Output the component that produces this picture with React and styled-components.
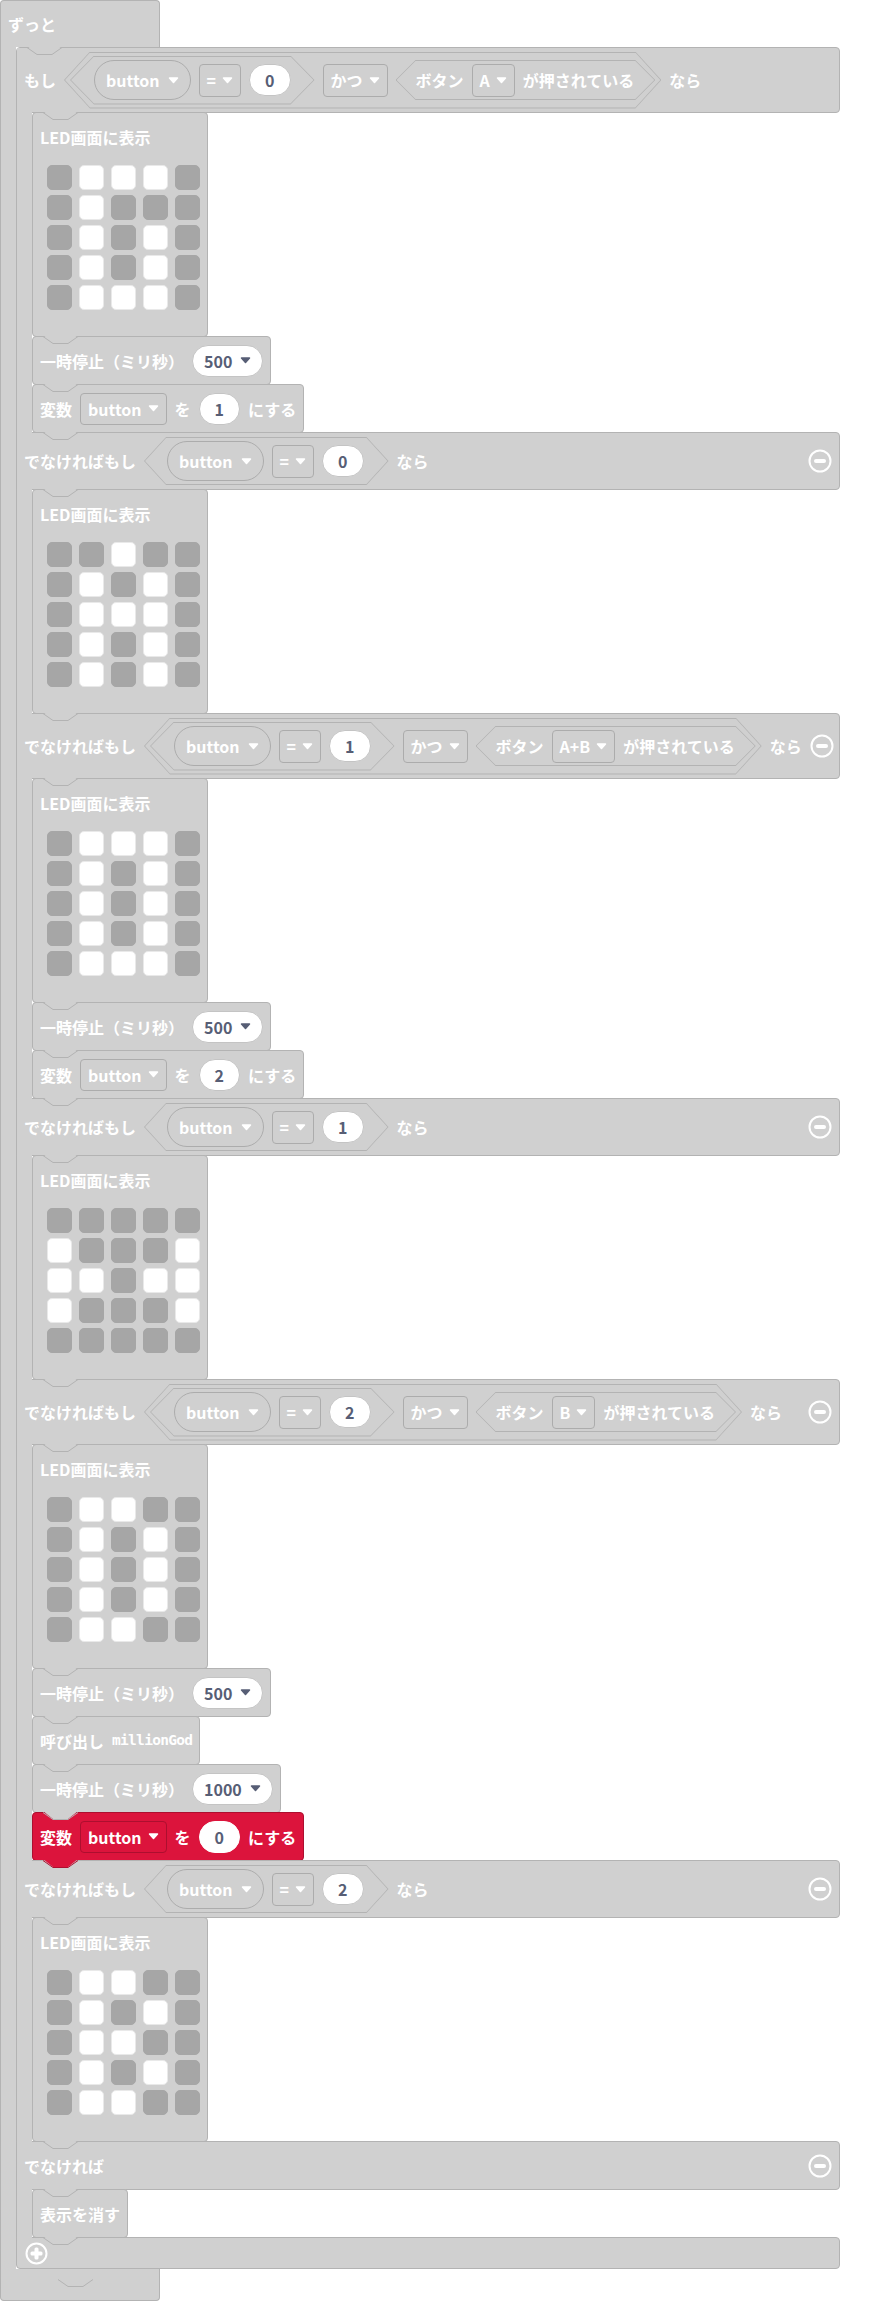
import React from 'react'
import styled, { createGlobalStyle } from 'styled-components'

const FILL = '#d0d0d0'
const EDGE = '#b3b3b3'
const FIELD_EDGE = '#acacac'
const LED_OFF = '#a6a6a6'
const RED = '#dc143c'
const RED_EDGE = '#ad0f2f'
const INK = '#575e75'

const GlobalStyle = createGlobalStyle`
  * { box-sizing: border-box; }
  body {
    margin: 0;
    background: #fff;
    font-family: "Noto Sans CJK JP", "Noto Sans", sans-serif;
    font-weight: 700;
    font-size: 16px;
    color: #fff;
  }
`

const Workspace = styled.div`
  width: 892px;
  min-height: 2302px;
  display: flex;
  flex-direction: column;
  align-items: flex-start;
`

const Forever = styled.div`
  display: flex;
  flex-direction: column;
  align-items: flex-start;
`

const ForeverHead = styled.div`
  position: relative;
  width: 160px;
  height: 47px;
  display: flex;
  align-items: center;
  padding-left: 7px;
  background: ${FILL};
  border: 1px solid ${EDGE};
  border-bottom: none;
  border-radius: 4px 4px 0 0;
`

const ForeverBody = styled.div`
  display: flex;
`

const ForeverFoot = styled.div`
  width: 160px;
  height: 32px;
  background: ${FILL};
  border: 1px solid ${EDGE};
  border-top: none;
  border-radius: 0 0 4px 4px;
`

const Arm = styled.div`
  width: 16px;
  flex-shrink: 0;
  background: ${FILL};
  border-left: 1px solid ${EDGE};
`

const IfBlock = styled.div`
  width: 824px;
  display: flex;
  flex-direction: column;
  & > * + * { margin-top: -1px; }
`

/* header row of the if / else-if / else parts; the mask hides the border where the arm runs through */
const CHeader = styled.div`
  position: relative;
  display: flex;
  align-items: center;
  gap: 8px;
  height: ${({ $h }) => $h}px;
  padding: 0 7px;
  background: ${FILL};
  border: 1px solid ${EDGE};
  border-radius: ${({ $first }) => ($first ? '4px 4px 4px 0' : '0 4px 4px 0')};
  &::before {
    content: '';
    position: absolute;
    left: 0;
    width: 15px;
    top: ${({ $first }) => ($first ? '0' : '-1px')};
    bottom: -1px;
    background: ${FILL};
  }
`

const CFoot = styled.div`
  position: relative;
  display: flex;
  align-items: center;
  height: 32px;
  padding-left: 8px;
  background: ${FILL};
  border: 1px solid ${EDGE};
  border-radius: 0 4px 4px 4px;
  &::before {
    content: '';
    position: absolute;
    left: 0;
    width: 15px;
    top: -1px;
    height: 2px;
    background: ${FILL};
  }
  & > svg { position: relative; }
`

const CBody = styled.div`
  display: flex;
`

const Stack = styled.div`
  display: flex;
  flex-direction: column;
  align-items: flex-start;
  & > * + * { margin-top: -1px; }
`

const Statement = styled.div`
  position: relative;
  display: flex;
  align-items: center;
  gap: 8px;
  height: 49px;
  padding: 0 7px;
  background: ${({ $red }) => ($red ? RED : FILL)};
  border: 1px solid ${({ $red }) => ($red ? RED_EDGE : EDGE)};
  border-radius: 4px;
`

const Label = styled.span`
  position: relative;
  line-height: 1;
  white-space: nowrap;
`

const Mono = styled.span`
  font-family: "DejaVu Sans Mono", "Liberation Mono", monospace;
  font-size: 14.5px;
  letter-spacing: -0.7px;
  line-height: 1;
`

const LedBlock = styled.div`
  position: relative;
  width: 176px;
  height: 225px;
  padding: 0 7px;
  background: ${FILL};
  border: 1px solid ${EDGE};
  border-radius: 4px;
`

const LedTitle = styled.div`
  height: 48px;
  display: flex;
  align-items: center;
  line-height: 1;
`

const LedGrid = styled.div`
  display: grid;
  grid-template-columns: repeat(5, 25px);
  grid-auto-rows: 25px;
  column-gap: 7px;
  row-gap: 5px;
  margin: 4px 0 0 7px;
`

const Led = styled.div`
  border-radius: 5px;
  background: ${({ $on }) => ($on ? '#fff' : LED_OFF)};
  border: 1px solid ${({ $on }) => ($on ? '#e9e9e9' : LED_OFF)};
`

const hexShape = (t) =>
  `polygon(${t}px 0, calc(100% - ${t}px) 0, 100% 50%, calc(100% - ${t}px) 100%, ${t}px 100%, 0 50%)`

const Hex = styled.div`
  position: relative;
  isolation: isolate;
  flex-shrink: 0;
  display: flex;
  align-items: center;
  gap: 8px;
  height: ${({ $h }) => $h}px;
  padding: 0 ${({ $pr }) => $pr}px 0 ${({ $pl }) => $pl}px;
  background: ${EDGE};
  clip-path: ${({ $tip }) => hexShape($tip)};
  &::before {
    content: '';
    position: absolute;
    inset: 1px;
    z-index: -1;
    background: ${FILL};
    clip-path: ${({ $tip }) => hexShape($tip - 1)};
  }
`

const VarPill = styled.div`
  display: flex;
  align-items: center;
  gap: 8px;
  height: 40px;
  padding: 0 11px;
  border: 1px solid ${FIELD_EDGE};
  border-radius: 20px;
  line-height: 1;
  flex-shrink: 0;
`

const Dropdown = styled.div`
  display: flex;
  align-items: center;
  gap: 6px;
  height: ${({ $h }) => $h || 33}px;
  padding: 0 7px;
  border: 1px solid ${({ $red }) => ($red ? RED_EDGE : FIELD_EDGE)};
  border-radius: 4px;
  line-height: 1;
  flex-shrink: 0;
`

const NumberPill = styled.div`
  display: flex;
  align-items: center;
  gap: 8px;
  height: 32px;
  padding: 0 ${({ $menu }) => ($menu ? '11px' : '15px')};
  background: #fff;
  border: 1px solid ${({ $red }) => ($red ? '#fff' : '#c4c4c4')};
  border-radius: 16px;
  color: ${INK};
  line-height: 1;
  flex-shrink: 0;
`

const IconSlot = styled.div`
  position: relative;
  margin-left: auto;
  display: flex;
  align-items: center;
`

const TabSvg = styled.svg`
  position: absolute;
  left: ${({ $left }) => $left}px;
  top: 100%;
  z-index: 5;
  overflow: visible;
`

function Tab({ left = 10, fill = FILL, stroke = EDGE }) {
  return (
    <TabSvg $left={left} width="36" height="9" viewBox="0 0 36 9">
      <path d="M0 -1 H35 L25 7 H10 Z" fill={fill} />
      <path d="M0 0.5 L10 7.5 H25 L35 0.5" fill="none" stroke={stroke} strokeWidth="1" />
    </TabSvg>
  )
}

function Arrow({ color = '#fff' }) {
  return (
    <svg width="11" height="7" viewBox="0 0 11 7">
      <path d="M1.5 1 H9.5 L5.5 5.5 Z" fill={color} stroke={color} strokeWidth="1.5" strokeLinejoin="round" />
    </svg>
  )
}

function MinusIcon() {
  return (
    <svg width="24" height="24" viewBox="0 0 24 24">
      <circle cx="12" cy="12" r="10.5" fill="none" stroke="#fff" strokeWidth="2" />
      <rect x="6" y="10" width="12" height="4" rx="2" fill="#fff" />
    </svg>
  )
}

function PlusIcon() {
  return (
    <svg width="23" height="23" viewBox="0 0 23 23">
      <circle cx="11.5" cy="11.5" r="10" fill="none" stroke="#fff" strokeWidth="2" />
      <rect x="5.5" y="9.5" width="12" height="4" rx="1.5" fill="#fff" />
      <rect x="9.5" y="5.5" width="4" height="12" rx="1.5" fill="#fff" />
    </svg>
  )
}

const LED1 = ['01110', '01000', '01010', '01010', '01110']
const LED2 = ['00100', '01010', '01110', '01010', '01010']
const LED3 = ['01110', '01010', '01010', '01010', '01110']
const LED4 = ['00000', '10001', '11011', '10001', '00000']
const LED5 = ['01100', '01010', '01010', '01010', '01100']
const LED6 = ['01100', '01010', '01100', '01010', '01100']

function ShowLeds({ rows }) {
  return (
    <LedBlock>
      <LedTitle>LED画面に表示</LedTitle>
      <LedGrid>
        {rows.join('').split('').map((c, i) => (
          <Led key={i} $on={c === '1'} />
        ))}
      </LedGrid>
      <Tab />
    </LedBlock>
  )
}

function Pause({ ms }) {
  return (
    <Statement>
      <Label>一時停止（ミリ秒）</Label>
      <NumberPill $menu>
        {ms}
        <Arrow color={INK} />
      </NumberPill>
      <Tab />
    </Statement>
  )
}

function SetVar({ value, red }) {
  return (
    <Statement $red={red}>
      <Label>変数</Label>
      <Dropdown $h={32} $red={red}>
        button
        <Arrow />
      </Dropdown>
      <Label>を</Label>
      <NumberPill $red={red}>{value}</NumberPill>
      <Label>にする</Label>
      <Tab fill={red ? RED : FILL} stroke={red ? RED_EDGE : EDGE} />
    </Statement>
  )
}

function Compare({ value, inAnd }) {
  return (
    <Hex $h={inAnd ? 49 : 48} $tip={inAnd ? 24 : 22} $pl={inAnd ? 24 : 23} $pr={inAnd ? 24 : 25}>
      <VarPill>
        button
        <Arrow />
      </VarPill>
      <Dropdown>
        =
        <Arrow />
      </Dropdown>
      <NumberPill>{value}</NumberPill>
    </Hex>
  )
}

function AndButton({ value, button }) {
  return (
    <Hex $h={57} $tip={26} $pl={6} $pr={6}>
      <Compare value={value} inAnd />
      <Dropdown>
        かつ
        <Arrow />
      </Dropdown>
      <Hex $h={40} $tip={20} $pl={20} $pr={21}>
        <Label>ボタン</Label>
        <Dropdown>
          {button}
          <Arrow />
        </Dropdown>
        <Label>が押されている</Label>
      </Hex>
    </Hex>
  )
}

function Minus() {
  return (
    <IconSlot>
      <MinusIcon />
    </IconSlot>
  )
}

function Branch({ children }) {
  return (
    <CBody>
      <Arm />
      <Stack>{children}</Stack>
    </CBody>
  )
}

export default function App() {
  return (
    <Workspace>
      <GlobalStyle />
      <Forever>
        <ForeverHead>
          <Label>ずっと</Label>
          <Tab left={26} />
        </ForeverHead>
        <ForeverBody>
          <Arm />
          <IfBlock>
            <CHeader $h={66} $first>
              <Label>もし</Label>
              <AndButton value="0" button="A" />
              <Label>なら</Label>
              <Tab left={26} />
            </CHeader>
            <Branch>
              <ShowLeds rows={LED1} />
              <Pause ms="500" />
              <SetVar value="1" />
            </Branch>

            <CHeader $h={58}>
              <Label>でなければもし</Label>
              <Compare value="0" />
              <Label>なら</Label>
              <Minus />
              <Tab left={26} />
            </CHeader>
            <Branch>
              <ShowLeds rows={LED2} />
            </Branch>

            <CHeader $h={66}>
              <Label>でなければもし</Label>
              <AndButton value="1" button="A+B" />
              <Label>なら</Label>
              <Minus />
              <Tab left={26} />
            </CHeader>
            <Branch>
              <ShowLeds rows={LED3} />
              <Pause ms="500" />
              <SetVar value="2" />
            </Branch>

            <CHeader $h={58}>
              <Label>でなければもし</Label>
              <Compare value="1" />
              <Label>なら</Label>
              <Minus />
              <Tab left={26} />
            </CHeader>
            <Branch>
              <ShowLeds rows={LED4} />
            </Branch>

            <CHeader $h={66}>
              <Label>でなければもし</Label>
              <AndButton value="2" button="B" />
              <Label>なら</Label>
              <Minus />
              <Tab left={26} />
            </CHeader>
            <Branch>
              <ShowLeds rows={LED5} />
              <Pause ms="500" />
              <Statement>
                <Label>呼び出し</Label>
                <Mono>millionGod</Mono>
                <Tab />
              </Statement>
              <Pause ms="1000" />
              <SetVar value="0" red />
            </Branch>

            <CHeader $h={58}>
              <Label>でなければもし</Label>
              <Compare value="2" />
              <Label>なら</Label>
              <Minus />
              <Tab left={26} />
            </CHeader>
            <Branch>
              <ShowLeds rows={LED6} />
            </Branch>

            <CHeader $h={49}>
              <Label>でなければ</Label>
              <Minus />
              <Tab left={26} />
            </CHeader>
            <Branch>
              <Statement>
                <Label>表示を消す</Label>
                <Tab />
              </Statement>
            </Branch>

            <CFoot>
              <PlusIcon />
              <Tab />
            </CFoot>
          </IfBlock>
        </ForeverBody>
        <ForeverFoot />
      </Forever>
    </Workspace>
  )
}
